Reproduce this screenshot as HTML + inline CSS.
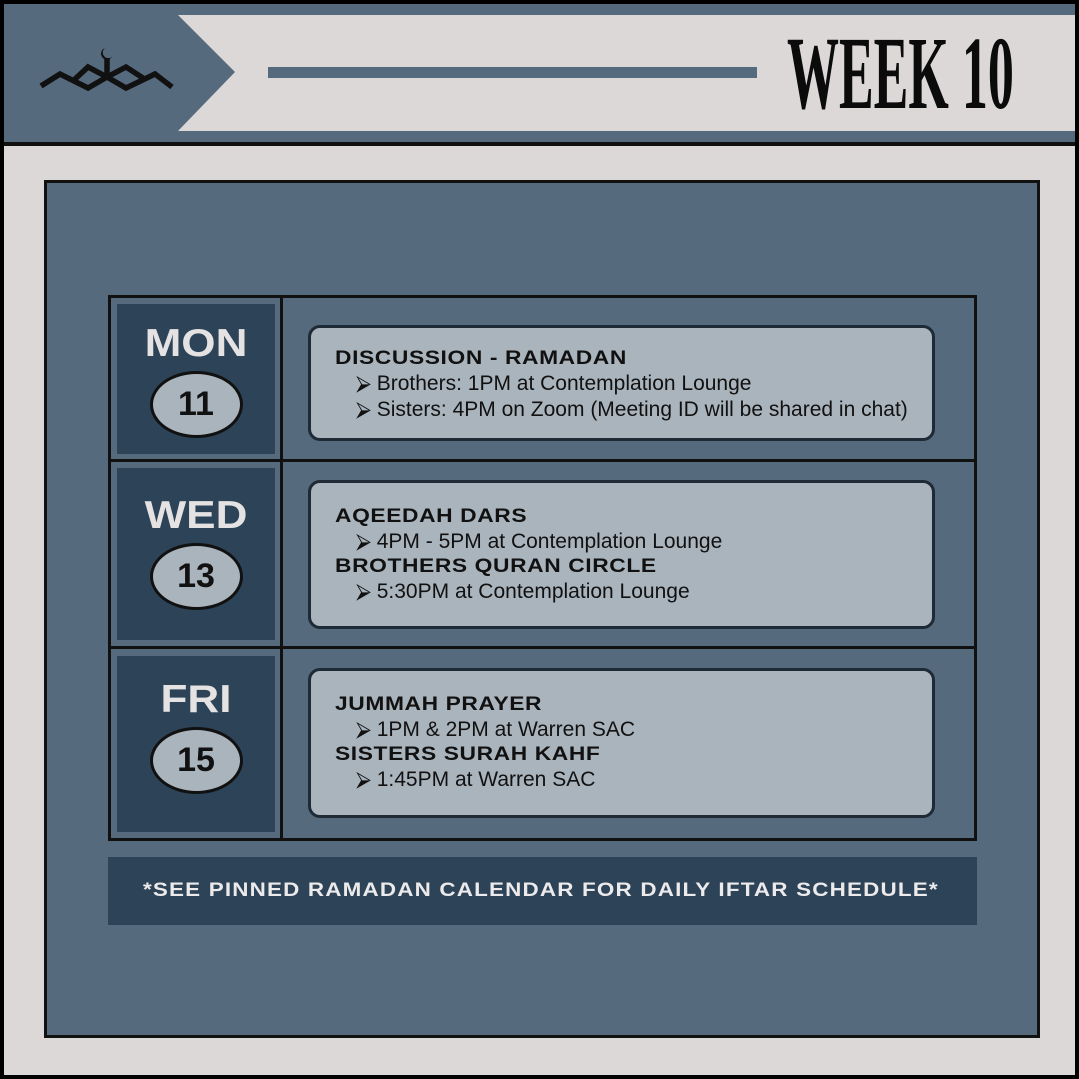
<!DOCTYPE html>
<html><head><meta charset="utf-8"><style>
*{margin:0;padding:0;box-sizing:border-box}
body{width:1079px;height:1079px;background:#000;position:relative;overflow:hidden;font-family:"Liberation Sans",sans-serif}
.abs{position:absolute}
.frame{left:4px;top:4px;width:1071px;height:1071px;background:#dcd8d8}
.hdr{left:4px;top:4px;width:1071px;height:138px;background:#566a7d}
.hline{left:4px;top:142px;width:1071px;height:4px;background:#111}
.inner{left:44px;top:180px;width:996px;height:858px;background:#566a7d;border:3px solid #111}
.table{left:108px;top:295px;width:869px;height:546px;border:3px solid #111;background:#566a7d}
.day{position:absolute;left:117px;width:158px;background:#2d4358;text-align:center;color:#e4e2e2}
.day .n{font-weight:bold;font-size:39px;margin-top:18px;transform:scaleX(1.13);}
.oval{width:93px;height:67px;border-radius:50%;background:#aab4bd;border:3px solid #111;margin:5px auto 0;color:#111;font-weight:bold;font-size:34px;line-height:61px}
.box{position:absolute;left:308px;width:627px;background:#aab4bd;border:3px solid #1e2a36;border-radius:12px;padding:19px 0 0 24px;color:#111}
.t{font-weight:bold;font-size:19px;letter-spacing:0.5px;line-height:24px;transform:scaleX(1.2);transform-origin:left;white-space:nowrap}
.b{font-size:21px;line-height:26px;padding-left:21px;white-space:nowrap;transform:scaleX(1.0);transform-origin:left}
.vl{background:#111}
</style></head><body>
<div class="abs frame"></div>
<div class="abs hdr"></div>
<svg class="abs" style="left:0;top:0" width="1079" height="146">
<polygon points="178,15 1075,15 1075,131 178,131 235,72" fill="#dcd8d8"/>
<rect x="268" y="67" width="489" height="11" fill="#566a7d"/>
<g fill="none" stroke="#111" stroke-width="5.5" stroke-linejoin="miter">
<path d="M41,86 L60,74 L88,88 L107,77 L126,88 L155,74 L172,87"/>
<path d="M74,80 L88,67 L107,77 L126,67 L143,78"/>
<path d="M107,58 L107,78"/>
</g>
<path d="M105,48 A6,6 0 1 0 112,57 A5,5 0 1 1 105,48Z" fill="#111"/>
</svg>
<div class="abs hline"></div>
<div class="abs" style="left:787px;top:12px;font-family:'Liberation Serif',serif;font-weight:bold;font-size:104px;line-height:124px;transform:scaleX(0.5);transform-origin:left;white-space:nowrap;color:#0b0b0b">WEEK 10</div>
<div class="abs inner"></div>
<div class="abs table"></div>
<div class="abs vl" style="left:280px;top:297px;width:3px;height:542px"></div>
<div class="abs vl" style="left:110px;top:459px;width:865px;height:3px"></div>
<div class="abs vl" style="left:110px;top:646px;width:865px;height:3px"></div>
<div class="day" style="top:304px;height:150px"><div class="n">MON</div><div class="oval">11</div></div>
<div class="day" style="top:468px;height:172px"><div class="n" style="margin-top:26px">WED</div><div class="oval">13</div></div>
<div class="day" style="top:656px;height:176px"><div class="n" style="margin-top:22px">FRI</div><div class="oval">15</div></div>
<div class="box" style="top:325px;height:116px"><div class="t">DISCUSSION - RAMADAN</div><div class="b">⮚ Brothers: 1PM at Contemplation Lounge</div><div class="b">⮚ Sisters: 4PM on Zoom (Meeting ID will be shared in chat)</div></div>
<div class="box" style="top:480px;height:149px;padding-top:22px"><div class="t">AQEEDAH DARS</div><div class="b">⮚ 4PM - 5PM at Contemplation Lounge</div><div class="t">BROTHERS QURAN CIRCLE</div><div class="b">⮚ 5:30PM at Contemplation Lounge</div></div>
<div class="box" style="top:668px;height:150px;padding-top:22px"><div class="t">JUMMAH PRAYER</div><div class="b">⮚ 1PM &amp; 2PM at Warren SAC</div><div class="t">SISTERS SURAH KAHF</div><div class="b">⮚ 1:45PM at Warren SAC</div></div>
<div class="abs" style="left:108px;top:857px;width:869px;height:68px;background:#2d4358;"></div>
<div class="abs" style="left:143px;top:858px;height:68px;color:#eceaea;font-weight:bold;font-size:19px;letter-spacing:1px;line-height:66px;white-space:nowrap;transform:scaleX(1.18);transform-origin:left">*SEE PINNED RAMADAN CALENDAR FOR DAILY IFTAR SCHEDULE*</div>
</body></html>
